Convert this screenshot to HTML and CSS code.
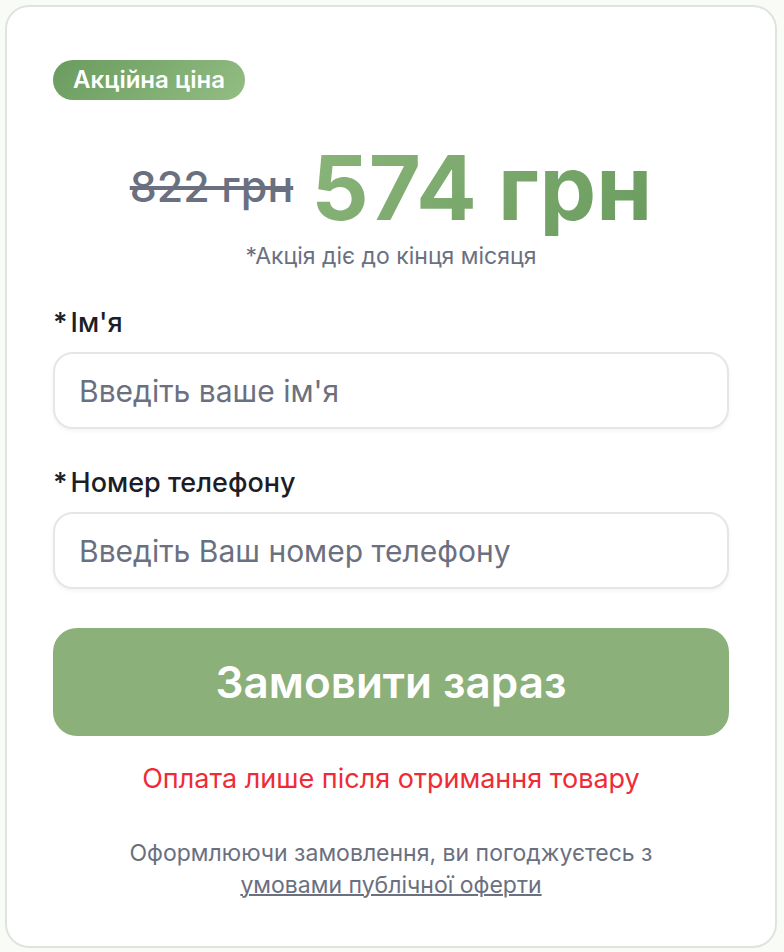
FILE: index.html
```html
<!DOCTYPE html>
<html lang="uk">
<head>
<meta charset="utf-8">
<meta name="viewport" content="width=device-width, initial-scale=1">
<title>Замовлення</title>
<link rel="stylesheet" href="styles.css">
</head>
<body>
<main class="card">
  <span class="badge">Акційна ціна</span>
  <div class="prices">
    <s class="price-old">822 грн</s>
    <strong class="price-new">574 грн</strong>
  </div>
  <p class="note">*Акція діє до кінця місяця</p>
  <form class="form">
    <div class="field">
      <label class="label" for="name"><span class="star">*</span>Ім'я</label>
      <input class="input" id="name" type="text" placeholder="Введіть ваше ім'я">
    </div>
    <div class="field">
      <label class="label" for="phone"><span class="star">*</span>Номер телефону</label>
      <input class="input" id="phone" type="tel" placeholder="Введіть Ваш номер телефону">
    </div>
    <button class="submit" type="submit">Замовити зараз</button>
  </form>
  <p class="payment">Оплата лише після отримання товару</p>
  <p class="terms">Оформлюючи замовлення, ви погоджуєтесь з<br><a class="link" href="#">умовами публічної оферти</a></p>
</main>
</body>
</html>
```
FILE: styles.css
```css
* {
  box-sizing: border-box;
}

body {
  margin: 0;
  padding: 5px 7px 5px 5px;
  background: #f9fbf7;
  color: #1b1e27;
  font-family: Inter, "Liberation Sans", sans-serif;
}

.card {
  display: flex;
  flex-direction: column;
  padding: 53px 46px 45px;
  background: #fff;
  border: 2px solid #dfe4dc;
  border-radius: 24px;
}

.badge {
  align-self: flex-start;
  padding: 4px 20px;
  border-radius: 20px;
  background: linear-gradient(135deg, #6a9b5e, #93bd83);
  color: #fff;
  font-size: 24px;
  font-weight: 600;
  line-height: 32px;
}

.prices {
  display: flex;
  justify-content: center;
  align-items: flex-start;
  gap: 18px;
  margin-top: 40px;
}

.price-old {
  color: #6b7080;
  font-size: 43px;
  font-weight: 500;
  line-height: 92px;
  text-decoration-thickness: 4px;
}

.price-new {
  background: linear-gradient(135deg, #8bb57a, #6a9b5e);
  background-clip: text;
  -webkit-background-clip: text;
  color: transparent;
  font-size: 90px;
  font-weight: 700;
  line-height: 96px;
}

.note {
  margin: 4px 0 0;
  color: #6b7080;
  font-size: 23px;
  line-height: 32px;
  text-align: center;
}

.form {
  display: flex;
  flex-direction: column;
  gap: 39px;
  margin-top: 36px;
}

.field {
  display: flex;
  flex-direction: column;
  gap: 14px;
}

.label {
  display: flex;
  gap: 3px;
  font-size: 27px;
  font-weight: 500;
  line-height: 30px;
}

.star {
  font-weight: 600;
}

.input {
  width: 100%;
  height: 77px;
  padding: 0 24px;
  background: #fff;
  border: 2px solid #e5e6e7;
  border-radius: 20px;
  box-shadow: 0 2px 4px #0000000d;
  color: inherit;
  font: inherit;
  font-size: 30px;
}

.input::placeholder {
  color: #6b7080;
  opacity: 1;
}

.submit {
  height: 108px;
  border: 0;
  border-radius: 24px;
  background: #8bb07a;
  color: #fff;
  font: inherit;
  font-size: 44px;
  font-weight: 600;
}

.payment {
  margin: 23px 0 0;
  color: #f02b36;
  font-size: 27px;
  line-height: 40px;
  text-align: center;
}

.terms {
  margin: 38px 0 0;
  color: #6b7080;
  font-size: 23px;
  line-height: 32px;
  text-align: center;
}

.link {
  color: inherit;
  text-decoration-thickness: 2px;
}
```
